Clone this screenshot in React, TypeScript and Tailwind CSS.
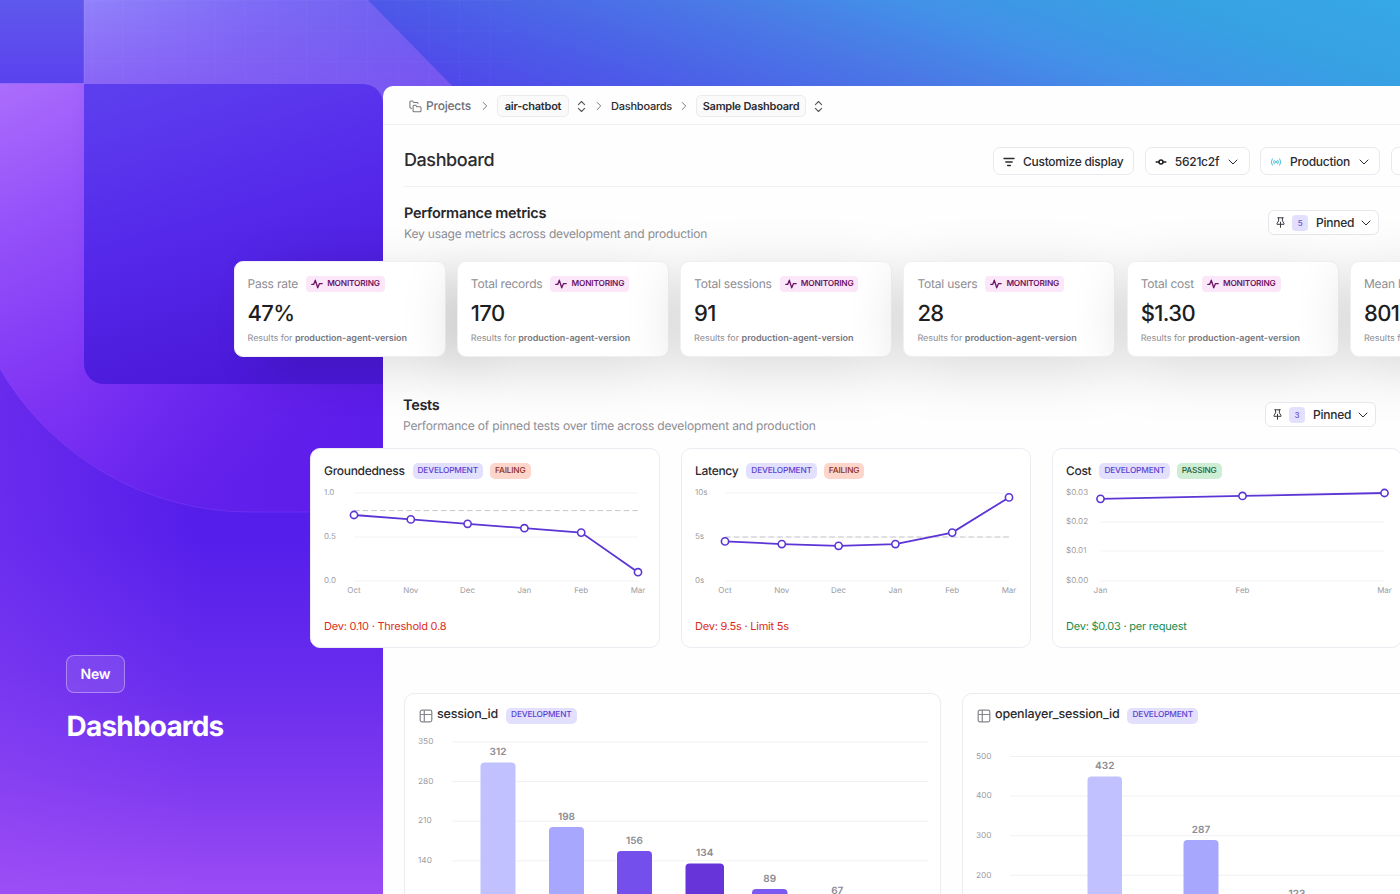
import type { ReactNode } from 'react';
import { ChevronDown, ChevronRight, ChevronsUpDown } from 'lucide-react';

type Tone = 'development' | 'failing' | 'passing';

const metrics = [
  { label: 'Pass rate', value: '47%' },
  { label: 'Total records', value: '170' },
  { label: 'Total sessions', value: '91' },
  { label: 'Total users', value: '28' },
  { label: 'Total cost', value: '$1.30' },
  { label: 'Mean latency', value: '801ms' },
];

const tests = [
  {
    title: 'Groundedness',
    status: 'failing' as Tone,
    left: 44,
    max: 1,
    ticks: [
      { label: '1.0', y: 45 },
      { label: '0.5', y: 89 },
      { label: '0.0', y: 133 },
    ],
    threshold: 0.8,
    months: ['Oct', 'Nov', 'Dec', 'Jan', 'Feb', 'Mar'],
    values: [0.75, 0.7, 0.65, 0.6, 0.55, 0.1],
    note: 'Dev: 0.10 · Threshold 0.8',
  },
  {
    title: 'Latency',
    status: 'failing' as Tone,
    left: 44,
    max: 10,
    ticks: [
      { label: '10s', y: 45 },
      { label: '5s', y: 89 },
      { label: '0s', y: 133 },
    ],
    threshold: 5,
    months: ['Oct', 'Nov', 'Dec', 'Jan', 'Feb', 'Mar'],
    values: [4.5, 4.2, 4, 4.2, 5.5, 9.5],
    note: 'Dev: 9.5s · Limit 5s',
  },
  {
    title: 'Cost',
    status: 'passing' as Tone,
    left: 48.5,
    max: 0.03,
    ticks: [
      { label: '$0.03', y: 45 },
      { label: '$0.02', y: 74 },
      { label: '$0.01', y: 103 },
      { label: '$0.00', y: 133 },
    ],
    threshold: null,
    months: ['Jan', 'Feb', 'Mar'],
    values: [0.028, 0.029, 0.03],
    note: 'Dev: $0.03 · per request',
  },
];

const sessionBars = [
  { value: 312, x: 76.5, w: 35, top: 69.5, fill: '#c0c1fe' },
  { value: 198, x: 145, w: 35, top: 134, fill: '#a8a7fe' },
  { value: 156, x: 213, w: 35, top: 158, fill: '#754fec' },
  { value: 134, x: 281.5, w: 38.5, top: 170.5, fill: '#6734da' },
  { value: 89, x: 348, w: 35.5, top: 196, fill: '#7a5af0' },
  { value: 67, x: 415.5, w: 35.5, top: 208.5, fill: '#a8a7fe' },
];

const openlayerBars = [
  { value: 432, x: 125.5, w: 34.5, top: 83.5, fill: '#c0c1fe' },
  { value: 287, x: 221.5, w: 35, top: 147, fill: '#a8a7fe' },
  { value: 123, x: 317.5, w: 35, top: 211, fill: '#754fec' },
];

const Backdrop = () => (
  <svg className="absolute inset-0" width="1400" height="894" viewBox="0 0 1400 894">
    <defs>
      <linearGradient id="base" x1="0" y1="0" x2="0" y2="1">
        <stop offset="0" stopColor="#5f58ec" />
        <stop offset="0.1" stopColor="#5a40ee" />
        <stop offset="0.3" stopColor="#5424ea" />
        <stop offset="0.45" stopColor="#541be8" />
        <stop offset="0.6" stopColor="#561eeb" />
        <stop offset="0.75" stopColor="#662bed" />
        <stop offset="0.88" stopColor="#7f3af0" />
        <stop offset="1" stopColor="#9b4cf4" />
      </linearGradient>
      <linearGradient id="sky" x1="360" y1="86" x2="496" y2="-310" gradientUnits="userSpaceOnUse">
        <stop offset="0" stopColor="#5340ec" />
        <stop offset="0.08" stopColor="#5048ea" />
        <stop offset="0.22" stopColor="#4c5ae8" />
        <stop offset="0.46" stopColor="#4a7ae6" />
        <stop offset="0.62" stopColor="#4292e8" />
        <stop offset="0.8" stopColor="#37a0e3" />
        <stop offset="1" stopColor="#36a8e7" />
      </linearGradient>
      <linearGradient id="leftGlow" x1="0" y1="0" x2="200" y2="0" gradientUnits="userSpaceOnUse">
        <stop offset="0" stopColor="#a355f8" stopOpacity="0.26" />
        <stop offset="1" stopColor="#a355f8" stopOpacity="0" />
      </linearGradient>
      <linearGradient id="bandTop" x1="84" y1="0" x2="420" y2="90" gradientUnits="userSpaceOnUse">
        <stop offset="0" stopColor="#9282fb" />
        <stop offset="0.5" stopColor="#7d6bf5" />
        <stop offset="1" stopColor="#6a5ff0" />
      </linearGradient>
      <linearGradient id="bandTopFade" x1="0" y1="0" x2="0" y2="86" gradientUnits="userSpaceOnUse">
        <stop offset="0" stopColor="#8450f2" stopOpacity="0" />
        <stop offset="1" stopColor="#8450f2" stopOpacity="0.55" />
      </linearGradient>
      <linearGradient id="bandSide" x1="0" y1="84" x2="200" y2="500" gradientUnits="userSpaceOnUse">
        <stop offset="0" stopColor="#ab6dfc" />
        <stop offset="0.3" stopColor="#9450f9" />
        <stop offset="0.65" stopColor="#7f34f4" />
        <stop offset="1" stopColor="#6723ee" />
      </linearGradient>
      <linearGradient id="bandSideFade" x1="70" y1="0" x2="383" y2="0" gradientUnits="userSpaceOnUse">
        <stop offset="0" stopColor="#5c1ce9" stopOpacity="0" />
        <stop offset="1" stopColor="#5c1ce9" />
      </linearGradient>
      <linearGradient id="square" x1="140" y1="84" x2="230" y2="384" gradientUnits="userSpaceOnUse">
        <stop offset="0" stopColor="#5c3eee" />
        <stop offset="0.5" stopColor="#5528ea" />
        <stop offset="1" stopColor="#4a18d8" />
      </linearGradient>
      <pattern id="dots" width="30.6" height="30.6" patternUnits="userSpaceOnUse">
        <path d="M0 .5H30.6M.5 0V30.6" stroke="#fff" strokeOpacity="0.05" strokeDasharray="1.5 2" />
      </pattern>
    </defs>
    <rect width="1400" height="894" fill="url(#base)" />
    <rect x="300" width="1100" height="90" fill="url(#sky)" />
    <rect y="350" width="383" height="544" fill="url(#leftGlow)" />
    <path d="M84 0H368L456 90V110H84Z" fill="url(#bandTop)" />
    <path d="M84 0H368L456 90V110H84Z" fill="url(#bandTopFade)" />
    <rect x="84" width="430" height="86" fill="url(#dots)" />
    <path d="M0 83.500H84V360L110 380H383V512H250A290 290 0 0 1 0 369Z" fill="url(#bandSide)" />
    <path d="M0 83.500H84V360L110 380H383V512H250A290 290 0 0 1 0 369Z" fill="url(#bandSideFade)" />
    <path d="M0 369A290 290 0 0 0 250 512H383" fill="none" stroke="#9a62ff" strokeOpacity="0.22" />
    <path d="M84 84H363A20 20 0 0 1 383 104V384H104A20 20 0 0 1 84 364Z" fill="url(#square)" />
    <path d="M84 0V84M0 83.500H84" stroke="#b79bff" strokeOpacity="0.3" />
  </svg>
);

const PulseIcon = () => (
  <svg width="12" height="12" viewBox="0 0 12 12" fill="none" stroke="#6b1664" strokeWidth="1.300" strokeLinecap="round" strokeLinejoin="round">
    <path d="M.8 6.400H2.700L4.300 2.200L6.700 9.800L8.500 5.600H11.200" />
  </svg>
);

const PinIcon = () => (
  <svg width="9" height="11" viewBox="0 0 9 11" fill="none" stroke="#3a3a40" strokeWidth="1" strokeLinecap="round" strokeLinejoin="round">
    <path d="M1.800.8H7.200M2.600 .8V3.900L1 6.400V7.300H8V6.400L6.400 3.900V.8M4.500 5.200V10.300" />
  </svg>
);

const FoldersIcon = () => (
  <svg width="13" height="13" viewBox="0 0 13 13" fill="none" stroke="#77777d" strokeWidth="1.050" strokeLinecap="round" strokeLinejoin="round">
    <path d="M2.600 8.300H1.800A1 1 0 0 1 .9 7.300V1.900A1 1 0 0 1 1.800 1H3.500L4.700 2.500H8A1 1 0 0 1 9 3.400" />
    <path d="M4.100 6.200A1 1 0 0 1 5.100 5.200H6.600L7.800 6.700H11A1 1 0 0 1 12 7.700V10.700A1 1 0 0 1 11 11.700H5.100A1 1 0 0 1 4.100 10.700Z" />
  </svg>
);

const TableIcon = () => (
  <svg width="14" height="14" viewBox="0 0 14 14" fill="none" stroke="#85858c" strokeWidth="1.200">
    <rect x="1.200" y="1.200" width="11.600" height="11.600" rx="1.800" />
    <path d="M1.200 5.500H12.800M5.300 1.200V12.800" />
  </svg>
);

const Pill = ({ tone }: { tone: Tone }) => {
  const styles = {
    development: 'bg-[#e3e0fe] text-[#5b3fd0]',
    failing: 'bg-[#fdd5cb] text-[#8a2c18]',
    passing: 'bg-[#cdeed4] text-[#1f5f38]',
  };

  return (
    <span className={`flex h-[16px] items-center rounded-[5px] px-[5px] text-[8.300px] leading-none font-medium tracking-[-0.170px] uppercase ${styles[tone]}`}>
      {tone}
    </span>
  );
};

const ToolButton = ({ className, children }: { className: string; children?: ReactNode }) => (
  <button
    className={`flex h-[28px] shrink-0 items-center rounded-[7px] border border-[#e8e8ee] bg-white pt-[1px] text-[12px] font-medium tracking-[-0.270px] text-[#2b2b30] ${className}`}
    type="button"
  >
    {children}
  </button>
);

const PinnedButton = ({ count }: { count: number }) => (
  <button
    className="flex h-[25px] w-[111px] shrink-0 items-center rounded-[6px] border border-[#e6e6ec] bg-white pl-[7px] text-[12px] font-medium tracking-[-0.250px] text-[#2b2b30]"
    type="button"
  >
    <PinIcon />
    <span className="ml-[7px] flex h-[16px] w-[16px] items-center justify-center rounded-[4px] bg-[#e3e0fe] text-[8px] text-[#6a55d8]">
      {count}
    </span>
    <span className="ml-[8px] w-[38px]">Pinned</span>
    <ChevronDown className="ml-[4px]" size={16} strokeWidth={1.500} />
  </button>
);

const SectionTitle = ({ title, text }: { title: string; text: string }) => (
  <div>
    <h2 className="text-[14.500px] leading-[20px] font-semibold tracking-[-0.290px] text-[#26262b]">{title}</h2>
    <p className="text-[12px] leading-[20px] tracking-[-0.170px] text-[#8d8d94]">{text}</p>
  </div>
);

const MetricCard = ({ label, value }: { label: string; value: string }) => (
  <div className="h-[96px] w-[212px] shrink-0 rounded-[9px] border border-[#f0f0f3] bg-white px-[13px] pt-[14px] shadow-[0_12px_56px_rgba(0,0,0,0.15)] first:shadow-[30px_12px_52px_rgba(0,0,0,0.13)]">
    <div className="flex h-[16px] items-center gap-[8px]">
      <span className="text-[12px] tracking-[-0.210px] whitespace-nowrap text-[#8d8d94]">{label}</span>
      <span className="flex h-[16px] items-center gap-[4px] rounded-[4px] bg-[#fbe6fa] px-[5px] text-[8.300px] font-semibold tracking-[-0.170px] text-[#6b1664]">
        <PulseIcon />
        MONITORING
      </span>
    </div>
    <div className="mt-[8px] text-[22px] leading-[28px] font-medium tracking-[-0.600px] text-[#1e1e22]">{value}</div>
    <div className="mt-[5px] text-[9px] leading-[12px] tracking-[-0.030px] whitespace-nowrap text-[#8d8d94]">
      Results for <span className="font-semibold text-[#77777f]">production-agent-version</span>
    </div>
  </div>
);

const TestCard = ({ test }: { test: (typeof tests)[number] }) => {
  const step = 284 / (test.values.length - 1);
  const points = test.values.map((value, i) => ({
    x: test.left + step * i,
    y: 133 - (88 * value) / test.max,
  }));

  return (
    <div className="relative h-[200px] w-[350px] shrink-0 rounded-[10px] border border-[#ececf2] bg-white">
      <div className="mt-[14px] flex h-[16px] items-center pl-[13px]">
        <span className="mr-[8px] text-[12px] font-medium tracking-[-0.300px] text-[#2b2b30]">{test.title}</span>
        <Pill tone="development" />
        <span className="w-[7px]" />
        <Pill tone={test.status} />
      </div>
      <svg className="absolute -top-px -left-px" width="350" height="160" viewBox="0 0 350 160">
        {test.ticks.map((tick) => (
          <g key={tick.label}>
            <path d={`M${test.left} ${tick.y}H${test.left + 284}`} stroke="#f2f2f4" />
            <text x="14" y={tick.y + 2.3} fontSize="8" fill="#9c9ca2">
              {tick.label}
            </text>
          </g>
        ))}
        {test.threshold !== null && (
          <path
            d={`M${test.left} ${133 - (88 * test.threshold) / test.max}h284`}
            stroke="#c6c6ca"
            strokeDasharray="5.500 3.200"
          />
        )}
        <polyline
          points={points.map((p) => `${p.x},${p.y}`).join(' ')}
          fill="none"
          stroke="#5b35d5"
          strokeWidth="1.800"
        />
        {points.map((p, i) => (
          <g key={test.months[i]}>
            <circle cx={p.x} cy={p.y} r="3.600" fill="#fff" stroke="#5b35d5" strokeWidth="1.600" />
            <text x={p.x} y="145" fontSize="8" textAnchor="middle" fill="#9c9ca2">
              {test.months[i]}
            </text>
          </g>
        ))}
      </svg>
      <p
        className={`mt-[139px] pl-[13px] text-[11px] leading-[16px] tracking-[-0.230px] ${test.status === 'failing' ? 'text-[#d92d20]' : 'text-[#178a4c]'}`}
      >
        {test.note}
      </p>
    </div>
  );
};

type Bar = (typeof sessionBars)[number];

const BarCard = ({ title, first, ticks, bars }: { title: string; first: number; ticks: number[]; bars: Bar[] }) => (
  <div className="relative h-[300px] w-[537px] shrink-0 rounded-[10px] border border-[#ececf0] bg-white">
    <div className="mt-[13px] flex h-[17px] items-center pl-[14px]">
      <TableIcon />
      <span className="mr-[8px] ml-[4px] text-[12.500px] font-medium tracking-[-0.170px] text-[#2b2b30]">{title}</span>
      <Pill tone="development" />
    </div>
    <svg className="absolute -top-px -left-px" width="537" height="300" viewBox="0 0 537 300">
      {ticks.map((tick, i) => (
        <g key={tick}>
          <path d={`M48 ${first + 39.6 * i}H524`} stroke="#f1f1f3" />
          <text x="14" y={first + 2.2 + 39.6 * i} fontSize="8.300" fill="#9c9ca2">
            {tick}
          </text>
        </g>
      ))}
      {bars.map((bar) => (
        <g key={bar.value}>
          <rect x={bar.x} y={bar.top} width={bar.w} height="300" rx="4" fill={bar.fill} />
          <text x={bar.x + bar.w / 2} y={bar.top - 7.5} fontSize="10" fontWeight="600" textAnchor="middle" fill="#8b8b93">
            {bar.value}
          </text>
        </g>
      ))}
    </svg>
  </div>
);

const Breadcrumbs = () => (
  <nav className="flex h-[39px] items-center border-b border-[#f1f1f4] pt-[2px] pl-[26px] text-[11px] font-medium tracking-[-0.230px] text-[#2b2b30]">
    <FoldersIcon />
    <span className="ml-[4px] w-[45px] text-[12px] text-[#6f6f76]">Projects</span>
    <ChevronRight className="ml-[7px] text-[#77777d]" size={14} strokeWidth={1.700} />
    <span className="ml-[5px] flex h-[22px] w-[72px] items-center justify-center rounded-[5px] border border-[#ececf0] bg-[#fafafb] font-semibold">
      air-chatbot
    </span>
    <ChevronsUpDown className="ml-[5px] text-[#55555b]" size={15} strokeWidth={1.700} />
    <ChevronRight className="ml-[3px] text-[#77777d]" size={14} strokeWidth={1.700} />
    <span className="ml-[5px] w-[61px]">Dashboards</span>
    <ChevronRight className="ml-[5px] text-[#77777d]" size={14} strokeWidth={1.700} />
    <span className="ml-[5px] flex h-[22px] w-[110px] items-center justify-center rounded-[5px] border border-[#ececf0] bg-[#fafafb] font-semibold whitespace-nowrap">
      Sample Dashboard
    </span>
    <ChevronsUpDown className="ml-[5px] text-[#55555b]" size={15} strokeWidth={1.700} />
  </nav>
);

const App = () => {
  return (
    <div className="relative flex h-[894px] w-[1400px] overflow-hidden bg-[#541deb] font-['Inter',sans-serif] [text-rendering:geometricPrecision]">
      <Backdrop />
      <aside className="relative w-[383px] shrink-0 pt-[655px] pl-[66px] text-white">
        <span className="flex h-[38px] w-[59px] items-center justify-center rounded-[8px] border border-white/35 bg-white/10 text-[14px] font-semibold tracking-[-0.200px]">
          New
        </span>
        <h1 className="mt-[15px] ml-[0.500px] text-[28px] leading-[36px] font-bold tracking-[-0.800px]">Dashboards</h1>
      </aside>
      <main className="relative mt-[86px] w-[1100px] shrink-0 rounded-tl-[10px] bg-[#fefefe]">
        <Breadcrumbs />
        <header className="ml-[21px] flex h-[62px] items-start border-b border-[#f1f1f4]">
          <span className="mt-[21px] w-[589px] shrink-0 text-[18px] leading-[29px] font-medium tracking-[-0.420px] text-[#2b2b30]">Dashboard</span>
          <div className="mt-[22px] flex gap-[10.500px]">
            <ToolButton className="w-[141px] pl-[9px]">
              <svg width="12" height="10" viewBox="0 0 12 10" stroke="#2b2b30" strokeWidth="1.400" strokeLinecap="round">
                <path d="M1 1.500H11M2.800 5H9.200M4.600 8.500H7.400" />
              </svg>
              <span className="ml-[8px]">Customize display</span>
            </ToolButton>
            <ToolButton className="w-[105px] pl-[9px]">
              <svg width="12" height="10" viewBox="0 0 12 10" fill="none" stroke="#1e1e22" strokeWidth="1.500" strokeLinecap="round">
                <circle cx="6" cy="5" r="2" />
                <path d="M1.200 5H3.800M8.200 5H10.800" />
              </svg>
              <span className="ml-[8px] w-[45px]">5621c2f</span>
              <ChevronDown className="ml-[5px]" size={16} strokeWidth={1.500} />
            </ToolButton>
            <ToolButton className="w-[120px] pl-[9px]">
              <svg width="12" height="10" viewBox="0 0 12 10" fill="none" stroke="#4cc3dc" strokeWidth="1" strokeLinecap="round">
                <circle cx="6" cy="5" r=".8" />
                <path d="M4.200 3.200Q2.900 5 4.200 6.800M7.800 3.200Q9.100 5 7.800 6.800M2.300 1.800Q0 5 2.300 8.200M9.700 1.800Q12 5 9.700 8.200" />
              </svg>
              <span className="ml-[8px] w-[60px]">Production</span>
              <ChevronDown className="ml-[6px]" size={16} strokeWidth={1.500} />
            </ToolButton>
            <ToolButton className="w-[120px]" />
          </div>
        </header>
        <section>
          <div className="ml-[21px] flex h-[74px] items-start justify-between pt-[17px] pr-[104px]">
            <SectionTitle title="Performance metrics" text="Key usage metrics across development and production" />
            <div className="pt-[6px]">
              <PinnedButton count={5} />
            </div>
          </div>
          <div className="-ml-[149.500px] flex gap-[11.300px]">
            {metrics.map((metric) => (
              <MetricCard key={metric.label} {...metric} />
            ))}
          </div>
        </section>
        <section className="relative">
          <div className="ml-[20px] flex h-[91px] items-start justify-between pt-[39px] pr-[107px]">
            <SectionTitle title="Tests" text="Performance of pinned tests over time across development and production" />
            <div className="pt-[6px]">
              <PinnedButton count={3} />
            </div>
          </div>
          <div className="-ml-[73px] flex gap-[21px]">
            {tests.map((test) => (
              <TestCard key={test.title} test={test} />
            ))}
          </div>
        </section>
        <section className="mt-[45px] ml-[21px] flex h-[201px] gap-[21px]">
          <BarCard title="session_id" first={49} ticks={[350, 280, 210, 140, 70]} bars={sessionBars} />
          <BarCard title="openlayer_session_id" first={63.5} ticks={[500, 400, 300, 200, 100]} bars={openlayerBars} />
        </section>
      </main>
    </div>
  );
};

export default App;
